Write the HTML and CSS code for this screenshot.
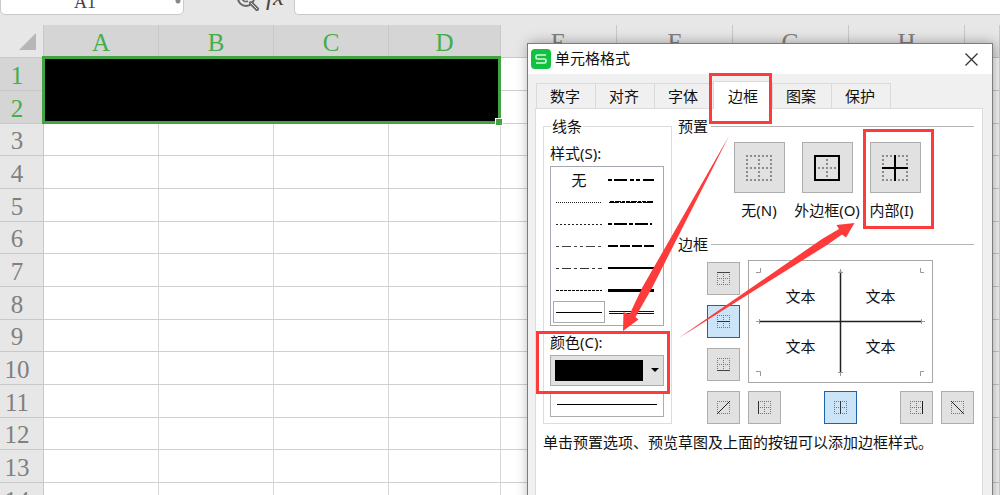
FILE: index.html
```html
<!DOCTYPE html>
<html lang="zh-CN">
<head>
<meta charset="utf-8">
<title>单元格格式</title>
<link rel="stylesheet" href="styles.css">
</head>
<body>
<svg class="defs" aria-hidden="true">
  <symbol id="dots" viewBox="0 0 13 13">
    <path d="M0 .5H13M0 6.5H13M0 12.5H13M.5 0V13M6.5 0V13M12.5 0V13" fill="none" stroke="#777" stroke-dasharray="1 1"/>
  </symbol>
  <symbol id="frame" viewBox="0 0 13 13">
    <path d="M0 .5H13M0 12.5H13M.5 0V13M12.5 0V13" fill="none" stroke="#777" stroke-dasharray="1 1"/>
  </symbol>
</svg>
<main class="app">
  <header class="bar">
    <input class="namebox" type="text" value="A1" aria-label="名称框">
    <div class="tools">
      <svg class="lens" viewBox="0 0 24 24" fill="none" stroke="#666">
        <circle cx="10" cy="10" r="8" stroke-width="2"/>
        <path d="M6 9a4 4 0 0 0 6 4" stroke-width="1.500"/>
        <path d="M15 15l6 6" stroke-width="4" stroke-linecap="round"/>
        <path d="M15 15l6 6" stroke="#e7e7e7" stroke-width="1" stroke-linecap="round"/>
      </svg>
      <span class="fx">fx</span>
    </div>
    <input class="formula" type="text" aria-label="编辑栏">
  </header>
  <table class="sheet">
    <colgroup>
      <col class="c-head"><col class="c"><col class="c"><col class="c"><col class="c-d"><col class="c-wide"><col class="c-wide"><col class="c-wide"><col class="c-wide"><col>
    </colgroup>
    <thead>
      <tr>
        <th class="corner"><svg viewBox="0 0 17 17"><path d="M17 0V17H0Z" fill="#b7b7b7"/></svg></th>
        <th class="on">A</th><th class="on">B</th><th class="on">C</th><th class="on">D</th><th>E</th><th>F</th><th>G</th><th>H</th><th></th>
      </tr>
    </thead>
    <tbody>
      <tr><th class="on">1</th><td class="range" colspan="4" rowspan="2"><span class="outline"><i class="handle"></i></span></td><td></td><td></td><td></td><td></td><td></td></tr>
      <tr><th class="on">2</th><td></td><td></td><td></td><td></td><td></td></tr>
      <tr><th>3</th><td></td><td></td><td></td><td></td><td></td><td></td><td></td><td></td><td></td></tr>
      <tr><th>4</th><td></td><td></td><td></td><td></td><td></td><td></td><td></td><td></td><td></td></tr>
      <tr><th>5</th><td></td><td></td><td></td><td></td><td></td><td></td><td></td><td></td><td></td></tr>
      <tr><th>6</th><td></td><td></td><td></td><td></td><td></td><td></td><td></td><td></td><td></td></tr>
      <tr><th>7</th><td></td><td></td><td></td><td></td><td></td><td></td><td></td><td></td><td></td></tr>
      <tr><th>8</th><td></td><td></td><td></td><td></td><td></td><td></td><td></td><td></td><td></td></tr>
      <tr><th>9</th><td></td><td></td><td></td><td></td><td></td><td></td><td></td><td></td><td></td></tr>
      <tr><th>10</th><td></td><td></td><td></td><td></td><td></td><td></td><td></td><td></td><td></td></tr>
      <tr><th>11</th><td></td><td></td><td></td><td></td><td></td><td></td><td></td><td></td><td></td></tr>
      <tr><th>12</th><td></td><td></td><td></td><td></td><td></td><td></td><td></td><td></td><td></td></tr>
      <tr><th>13</th><td></td><td></td><td></td><td></td><td></td><td></td><td></td><td></td><td></td></tr>
      <tr><th>14</th><td></td><td></td><td></td><td></td><td></td><td></td><td></td><td></td><td></td></tr>
    </tbody>
  </table>
</main>

<section class="dialog" role="dialog" aria-labelledby="dlg-title">
  <header class="title">
    <svg class="logo" viewBox="0 0 20 20">
      <rect width="20" height="20" rx="4" fill="#12c140"/>
      <path d="M15 6H6.5Q5 6 5 8T6.500 10H13.500Q15 10 15 12T13.500 14H5" fill="none" stroke="#d8f8df" stroke-width="1.600"/>
    </svg>
    <h1 id="dlg-title">单元格格式</h1>
    <button class="close" type="button" aria-label="关闭"><svg viewBox="0 0 13 13"><path d="M.5 .5l12 12M12.500 .5l-12 12" stroke="#333" stroke-width="1.300"/></svg></button>
  </header>
  <div class="body">
    <nav class="tabs" role="tablist">
      <button type="button" role="tab">数字</button>
      <button type="button" role="tab">对齐</button>
      <button type="button" role="tab">字体</button>
      <button type="button" role="tab" class="active" aria-selected="true">边框</button>
      <button type="button" role="tab">图案</button>
      <button type="button" role="tab">保护</button>
    </nav>
    <div class="panel">
      <div class="columns">
        <fieldset class="line">
          <legend>线条</legend>
          <span class="label" id="style-label">样式(S):</span>
          <div class="styles" role="group" aria-labelledby="style-label">
            <button type="button">无</button>
            <button type="button" aria-label="粗双点划线"><svg viewBox="0 0 46 8"><path d="M0 4H46" stroke="#000" stroke-width="2" stroke-dasharray="4 2 13 3 4 2 4 3 13 2"/></svg></button>
            <button type="button" aria-label="细点线"><svg viewBox="0 0 46 8"><path d="M0 4.500H46" stroke="#222" stroke-dasharray="1 1"/></svg></button>
            <button type="button" aria-label="斜点划线"><svg viewBox="0 0 46 8"><path d="M1 4.500H46" stroke="#000" stroke-dasharray="10 1 5 1"/><path d="M2 3.500H46" stroke="#000" stroke-dasharray="4 1 6 1 3 1"/></svg></button>
            <button type="button" aria-label="点线"><svg viewBox="0 0 46 8"><path d="M0 4.500H46" stroke="#222" stroke-dasharray="2 2"/></svg></button>
            <button type="button" aria-label="粗点划线"><svg viewBox="0 0 46 8"><path d="M0 4H44" stroke="#000" stroke-width="2" stroke-dasharray="4 2 13 2 4 2 13 2"/></svg></button>
            <button type="button" aria-label="双点划线"><svg viewBox="0 0 46 8"><path d="M0 4.500H46" stroke="#444" stroke-dasharray="3 3 9 3 3 3"/></svg></button>
            <button type="button" aria-label="粗虚线"><svg viewBox="0 0 46 8"><path d="M0 4H46" stroke="#000" stroke-width="2" stroke-dasharray="10 2"/></svg></button>
            <button type="button" aria-label="点划线"><svg viewBox="0 0 46 8"><path d="M0 4.500H46" stroke="#333" stroke-dasharray="3 3 9 3"/></svg></button>
            <button type="button" aria-label="中实线"><svg viewBox="0 0 46 8"><path d="M0 4H46" stroke="#000" stroke-width="2"/></svg></button>
            <button type="button" aria-label="虚线"><svg viewBox="0 0 46 8"><path d="M0 4.500H46" stroke="#000" stroke-dasharray="3 1"/></svg></button>
            <button type="button" aria-label="粗实线"><svg viewBox="0 0 46 8"><path d="M0 4.500H46" stroke="#000" stroke-width="3"/></svg></button>
            <button type="button" class="picked" aria-label="细实线"><svg viewBox="0 0 46 8"><path d="M0 4.500H46" stroke="#000"/></svg></button>
            <button type="button" aria-label="双实线"><svg viewBox="0 0 46 8"><path d="M1 3.500H46M1 5.500H46" stroke="#111"/></svg></button>
          </div>
          <label class="label color-label" for="color">颜色(C):</label>
          <div class="color">
            <select id="color"><option value="#000000"></option></select>
            <svg class="arrow" viewBox="0 0 8 4"><path d="M0 0H8L4 4Z"/></svg>
          </div>
          <div class="sample"><span></span></div>
        </fieldset>
        <div class="right">
          <h2>预置</h2>
          <div class="presets">
            <div class="preset">
              <button id="p-none" type="button"><svg viewBox="0 0 26 26" fill="none" stroke="#8c8c8c" stroke-width="2"><path d="M0 1H26M0 13H26M0 25H26M1 0V26M13 0V26M25 0V26" stroke-dasharray="2 2"/></svg></button>
              <label for="p-none">无(N)</label>
            </div>
            <div class="preset">
              <button id="p-outer" type="button"><svg viewBox="0 0 26 26" fill="none" stroke-width="2"><path d="M4 13H24M13 4V24" stroke="#8c8c8c" stroke-dasharray="2 2"/><rect x="1" y="1" width="24" height="24" stroke="#000"/></svg></button>
              <label for="p-outer">外边框(O)</label>
            </div>
            <div class="preset">
              <button id="p-inner" type="button"><svg viewBox="0 0 26 26" fill="none" stroke-width="2"><path d="M0 1H26M0 25H26M1 0V26M25 0V26" stroke="#8c8c8c" stroke-dasharray="2 2"/><path d="M0 13H26M13 0V26" stroke="#000"/></svg></button>
              <label class="inner-label" for="p-inner">内部(I)</label>
            </div>
          </div>
          <h2 class="second">边框</h2>
          <div class="editor">
            <div class="side">
              <button type="button" aria-label="上边框"><svg viewBox="0 0 13 13"><use href="#dots"/><path d="M0 .5H13" stroke="#444"/></svg></button>
              <button type="button" class="active" aria-label="水平内部边框"><svg viewBox="0 0 13 13"><use href="#dots"/><path d="M0 6.500H13" stroke="#333"/></svg></button>
              <button type="button" aria-label="下边框"><svg viewBox="0 0 13 13"><use href="#dots"/><path d="M0 12.500H13" stroke="#444"/></svg></button>
            </div>
            <div class="preview">
              <svg class="marks" viewBox="0 0 183 121" fill="none">
                <path d="M91.500 10V112M10 60.500H173" stroke="#222" stroke-width="1.500"/>
                <path d="M7 11.500H11.500V7M175 11.500H171.500V7M7 110.500H11.500V115M175 110.500H171.500V115M89 11.500H94M89 111.500H94M10.500 58V63M172.500 58V63M7 60.500H10M173 60.500H176M91.500 8V11M91.500 112V115" stroke="#999"/>
              </svg>
              <span>文本</span><span>文本</span><span>文本</span><span>文本</span>
            </div>
            <button type="button" aria-label="左斜线"><svg viewBox="0 0 13 13"><use href="#frame"/><path d="M0 13L13 0" stroke="#222"/></svg></button>
            <div class="under">
              <button type="button" aria-label="左边框"><svg viewBox="0 0 13 13"><use href="#dots"/><path d="M.5 0V13" stroke="#333"/></svg></button>
              <button type="button" class="active" aria-label="垂直内部边框"><svg viewBox="0 0 13 13"><use href="#dots"/><path d="M6.500 0V13" stroke="#333"/></svg></button>
              <button type="button" aria-label="右边框"><svg viewBox="0 0 13 13"><use href="#dots"/><path d="M12.500 0V13" stroke="#222"/></svg></button>
            </div>
            <button type="button" aria-label="右斜线"><svg viewBox="0 0 13 13"><use href="#frame"/><path d="M0 0L13 13" stroke="#222"/></svg></button>
          </div>
        </div>
      </div>
      <p class="hint">单击预置选项、预览草图及上面的按钮可以添加边框样式。</p>
    </div>
  </div>
</section>

<svg class="notes" viewBox="0 0 1000 495" aria-hidden="true">
  <g fill="none" stroke="#fd3b3b" stroke-width="3">
    <rect x="710.500" y="74.500" width="60" height="48"/>
    <rect x="864.500" y="130.500" width="68" height="97"/>
    <rect x="537.500" y="332.500" width="131" height="60"/>
  </g>
  <g fill="#fd3b3b">
    <path d="M729 136L652 288L635.500 317L638.500 319.500L623 331L623.500 312L629.500 314.500L642 288Z"/>
    <path d="M678 338.500L822 239L839 229L836.500 225L854.500 223L846 237.500L842 234.500L827 245Z"/>
  </g>
</svg>
</body>
</html>
```
FILE: styles.css
```css
* { box-sizing: border-box; }
body {
  margin: 0;
  height: 100vh;
  overflow: hidden;
  background: #e7e7e7;
  color: #111;
  font: 15px/20px "Noto Sans", "Noto Sans CJK SC", sans-serif;
}
button, input, select { font: inherit; color: inherit; margin: 0; padding: 0; }
svg { display: block; }
.defs { position: absolute; width: 0; height: 0; }
.app { height: 100vh; overflow: hidden; }

/* formula bar */
.bar {
  display: flex;
  align-items: flex-end;
  height: 25px;
  padding-bottom: 10px;
  overflow: hidden;
}
.namebox, .formula {
  flex: none;
  height: 32px;
  border: 1px solid #cacaca;
  border-radius: 5px;
  background: #fff;
}
.namebox {
  width: 184px;
  padding: 6px 14px 0 0;
  text-align: center;
  font: 18px "Liberation Serif", serif;
  color: #444;
  background: radial-gradient(circle at 177px 17px, #888 2px, #fff 3px);
}
.formula { flex: 1; border-right: 0; border-radius: 5px 0 0 5px; }
.tools {
  display: flex;
  align-items: flex-end;
  justify-content: flex-end;
  width: 110px;
  padding-right: 10px;
  gap: 6px;
}
.lens { width: 24px; height: 24px; margin-bottom: 3px; }
.fx { font: italic 25px/24px "Liberation Serif", serif; color: #444; padding-bottom: 6px; }

/* sheet */
.sheet {
  width: 100%;
  table-layout: fixed;
  border-collapse: separate;
  border-spacing: 0;
}
.c-head { width: 44px; }
.c { width: 115px; }
.c-d { width: 112px; }
.c-wide { width: 116px; }
.sheet th, .sheet td {
  height: 33px;
  padding: 0;
  border-right: 1px solid #d6d6d6;
  border-bottom: 1px solid #d0d0d0;
}
.sheet tbody tr:nth-child(3n) > * { height: 32px; }
.sheet td { background: #fff; }
.sheet th {
  background: #e7e7e7;
  color: #808080;
  font: 25px/28px "Liberation Serif", serif;
}
.sheet thead th { padding-top: 4px; border-color: #c8c8c8; }
.sheet tbody th { padding: 3px 9px 0 0; border-color: #c8c8c8; }
.sheet th.on { background: #d5d5d5; color: #45ad4b; }
.sheet .corner { padding: 0 7px 0 19px; }
.corner svg { width: 17px; height: 17px; }
.sheet .range { position: relative; background: #000; border: 0; }
.outline { position: absolute; inset: -2px 0 0 -2px; border: 3px solid #43a343; }
.handle {
  position: absolute;
  right: -4px;
  bottom: -4px;
  width: 6px;
  height: 6px;
  background: #43a343;
  outline: 1px solid #fff;
}

/* dialog window */
.dialog {
  position: absolute;
  left: 527px;
  top: 43px;
  bottom: -20px;
  width: 466px;
  display: flex;
  flex-direction: column;
  border: 1px solid #7c7c7c;
  background: #f0f0f0;
  box-shadow: 2px 0 12px rgba(0, 0, 0, .35);
}
.title {
  display: flex;
  align-items: center;
  gap: 4px;
  height: 30px;
  padding: 0 14px 0 3px;
  background: #fff;
}
.logo { width: 20px; height: 20px; }
.title h1 { flex: 1; margin: 0; padding-bottom: 2px; font-size: 15px; font-weight: 400; }
.close { border: 0; background: none; }
.close svg { width: 13px; height: 13px; }
.body { flex: 1; display: flex; flex-direction: column; padding: 9px 9px 0 7px; }
.tabs { display: flex; align-items: flex-end; height: 25px; padding-left: 1px; }
.tabs button {
  width: 59px;
  height: 25px;
  padding-right: 2px;
  border: 1px solid #dadada;
  border-width: 1px 0 0 1px;
  background: #f0f0f0;
}
.tabs button:last-child { width: 60px; border-right-width: 1px; }
.tabs .active { height: 28px; margin-bottom: -1px; padding-right: 0; background: #fff; z-index: 1; }
.panel {
  flex: 1;
  padding: 7px 8px 0 7px;
  border: 1px solid #dcdcdc;
  background: #fff;
}
.columns { display: flex; gap: 6px; }

/* line styles */
.line {
  flex: none;
  width: 129px;
  margin: 0;
  padding: 6px 7px 6px 6px;
  border: 1px solid #dcdcdc;
}
.line legend { margin-left: 1px; padding: 0 1px; height: 20px; }
.label { display: block; line-height: 22px; padding-bottom: 2px; }
.color-label { margin-top: 5px; }
.styles {
  display: grid;
  grid-template-columns: 52px 52px;
  grid-auto-rows: 22px;
  padding: 2px;
  border: 1px solid #a5a8b0;
}
.styles button {
  display: flex;
  align-items: center;
  justify-content: center;
  border: 1px solid transparent;
  background: none;
}
.styles .picked { border-color: #aaa; }
.styles svg { width: 46px; height: 8px; }
.color { position: relative; }
.color select {
  display: block;
  width: 100%;
  height: 31px;
  appearance: none;
  border: 1px solid #adadad;
  border-radius: 0;
  background: #e1e1e1 linear-gradient(#000, #000) 4px 4px / 88px 21px no-repeat;
}
.arrow { position: absolute; right: 5px; top: 13px; width: 8px; height: 4px; }
.sample {
  display: flex;
  align-items: center;
  height: 25px;
  margin-top: 6px;
  padding: 0 6px;
  border: 1px solid #adadad;
}
.sample span { flex: 1; border-top: 1px solid #000; }

/* presets and border editor */
.right { flex: 1; }
.right h2 {
  display: flex;
  align-items: center;
  gap: 3px;
  margin: 0;
  font-size: 15px;
  font-weight: 400;
}
.right h2::after { content: ""; flex: 1; border-top: 1px solid #b4b4b4; }
.right .second { margin-top: 11px; }
.presets { display: flex; margin: 6px 0 0 47px; }
.preset { display: flex; flex-direction: column; align-items: center; gap: 6px; width: 68px; }
.preset label { line-height: 22px; padding-bottom: 2px; white-space: nowrap; }
.preset .inner-label { width: 51px; }
.preset button, .editor button {
  display: flex;
  align-items: center;
  justify-content: center;
  border: 1px solid #adadad;
  background: #e1e1e1;
}
.preset button { width: 51px; height: 51px; }
.preset svg { width: 26px; height: 26px; }
.editor {
  display: grid;
  grid-template-columns: 33px 185px 33px;
  grid-template-rows: 123px 33px;
  gap: 8px;
  margin: 6px 0 0 29px;
}
.editor button { width: 33px; height: 33px; }
.editor button svg { width: 13px; height: 13px; }
.editor .active { border-color: #1a64a8; background: #cce4f7; }
.side { display: flex; flex-direction: column; justify-content: center; gap: 10px; }
.preview {
  position: relative;
  grid-column: 2 / 4;
  width: 185px;
  display: grid;
  grid-template-columns: 80px 80px;
  grid-template-rows: 50px 50px;
  place-content: center;
  place-items: center;
  border: 1px solid #a8a8a8;
}
.preview span { padding-bottom: 2px; }
.marks { position: absolute; inset: 0; width: 100%; height: 100%; }
.under { display: flex; justify-content: space-between; }
.hint { margin: 8px 0 0; white-space: nowrap; }

/* callouts drawn over the window */
.notes { position: absolute; z-index: 2; left: 0; top: 0; width: 1000px; height: 495px; pointer-events: none; }
```
